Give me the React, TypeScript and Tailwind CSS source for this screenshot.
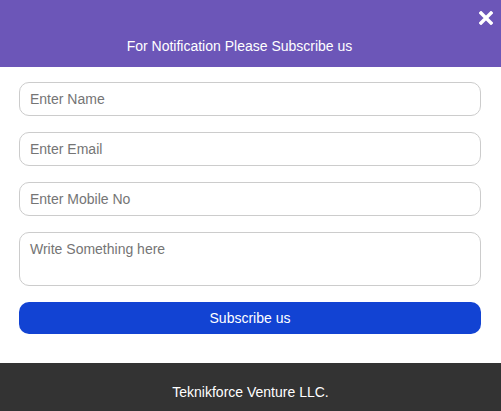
import React from "react";

export default function App() {
  return (
    <div className="w-[501px] h-[411px] flex flex-col bg-white" style={{ fontFamily: '"Liberation Sans", Arial, sans-serif' }}>
      <div className="relative h-[67px] bg-[#6c56b8] flex items-end justify-center pb-[13px] pr-[22px]">
        <span className="text-white text-[14px] leading-[16px]">For Notification Please Subscribe us</span>
        <button className="absolute right-[7px] top-[10px] w-[16px] h-[16px] flex items-center justify-center">
          <svg width="14" height="14" viewBox="0 0 14 14">
            <path d="M2 2 L12 12 M12 2 L2 12" stroke="white" strokeWidth="3.4" strokeLinecap="square" />
          </svg>
        </button>
      </div>
      <div className="flex-1 flex flex-col pl-[19px] pr-[20px] pt-[15px] gap-[16px]">
        <input className="h-[34px] w-full border border-[#cccccc] rounded-[10px] px-[10px] text-[14px] placeholder-[#757575] outline-none" placeholder="Enter Name" />
        <input className="h-[34px] w-full border border-[#cccccc] rounded-[10px] px-[10px] text-[14px] placeholder-[#757575] outline-none" placeholder="Enter Email" />
        <input className="h-[34px] w-full border border-[#cccccc] rounded-[10px] px-[10px] text-[14px] placeholder-[#757575] outline-none" placeholder="Enter Mobile No" />
        <textarea className="h-[54px] w-full border border-[#cccccc] rounded-[10px] px-[10px] pt-[8px] text-[14px] leading-[16px] placeholder-[#757575] outline-none resize-none" placeholder="Write Something here" />
        <button className="h-[32px] w-full bg-[#1243d3] rounded-[10px] text-white text-[14px]">Subscribe us</button>
      </div>
      <div className="h-[48px] bg-[#333333] flex items-end justify-center pb-[11px]">
        <span className="text-white text-[14px] leading-[16px]">Teknikforce Venture LLC.</span>
      </div>
    </div>
  );
}
